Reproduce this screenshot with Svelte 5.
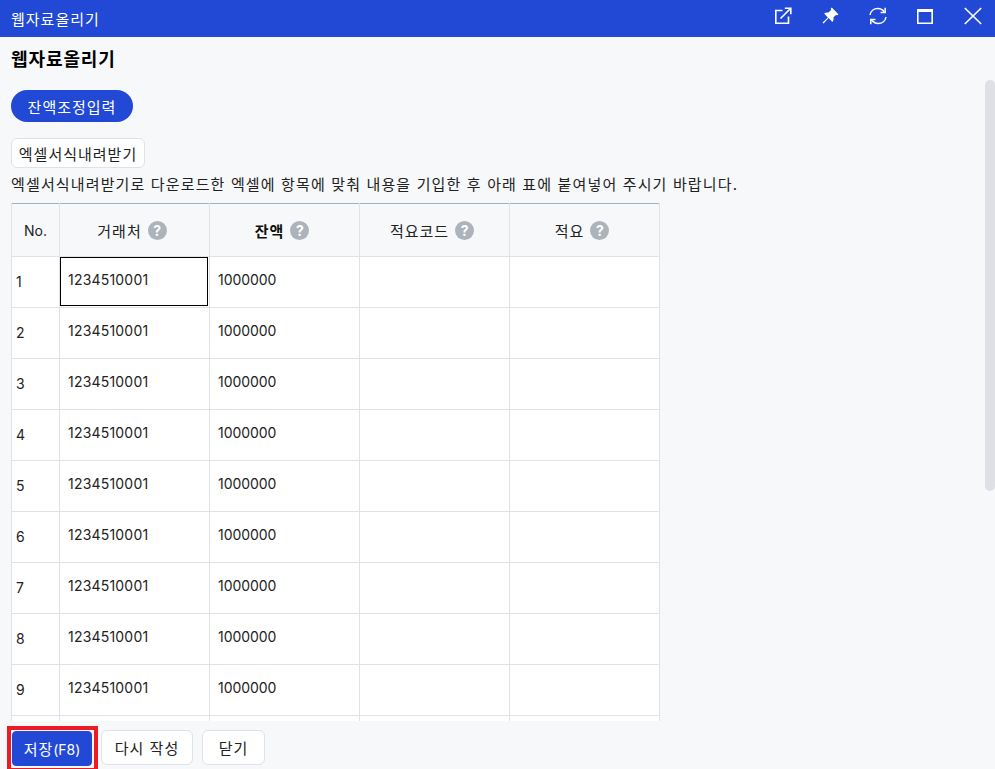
<script>
  const rows = [1, 2, 3, 4, 5, 6, 7, 8, 9, 10];
  const headers = [
    { label: '거래처', bold: false },
    { label: '잔액', bold: true },
    { label: '적요코드', bold: false },
    { label: '적요', bold: false }
  ];
</script>

<div class="page">
  <header class="titlebar">
    <span class="wintitle ko">웹자료올리기</span>
    <div class="winicons">
      <svg width="20" height="20" viewBox="0 0 20 20" fill="none" stroke="#fff" stroke-width="1.6">
        <path d="M15.5 10.5V17.2H2.8V4.5H9.5" />
        <path d="M7.5 12.5L17.5 2.5M11.8 2.2H17.8V8.2" />
      </svg>
      <svg width="20" height="20" viewBox="0 0 20 20" fill="#fff">
        <path d="M11.8 1.6L18.4 8.2L17.4 9.2L16 8.9L13.4 11.6C13.9 13.4 13.4 14.9 12.4 15.9L8.6 12.1L3.6 17.4L2.6 16.4L7.9 11.4L4.1 7.6C5.1 6.6 6.6 6.1 8.4 6.6L11.1 4L10.8 2.6Z" />
      </svg>
      <svg width="20" height="20" viewBox="0 0 20 20" fill="none" stroke="#fff" stroke-width="1.5">
        <path d="M2 9C2.6 5.2 5.8 2.6 9.9 2.6C12.6 2.6 14.8 3.8 16.4 6" />
        <path d="M18 11C17.4 14.8 14.2 17.4 10.1 17.4C7.4 17.4 5.2 16.2 3.6 14" />
        <path d="M17.2 1.8V6.6H12.5M2.8 18.2V13.4H7.5" />
      </svg>
      <svg width="20" height="20" viewBox="0 0 20 20" fill="none" stroke="#fff">
        <path d="M2.8 3.8H17.2V17.2H2.8Z" stroke-width="1.6" />
        <path d="M2.8 4.5H17.2" stroke-width="3" />
      </svg>
      <svg width="20" height="20" viewBox="0 0 20 20" fill="none" stroke="#fff" stroke-width="1.6">
        <path d="M1.8 2L18.2 18M18.2 2L1.8 18" />
      </svg>
    </div>
  </header>

  <main class="content">
    <h1 class="heading">웹자료올리기</h1>
    <button class="pill ko">잔액조정입력</button>
    <button class="download ko">엑셀서식내려받기</button>
    <p class="notice ko">엑셀서식내려받기로 다운로드한 엑셀에 항목에 맞춰 내용을 기입한 후 아래 표에 붙여넣어 주시기 바랍니다.</p>

    <table class="grid">
      <colgroup>
        <col class="c-no" />
        <col class="c-data" />
        <col class="c-data" />
        <col class="c-data" />
        <col class="c-data" />
      </colgroup>
      <thead>
        <tr>
          <th>No.</th>
          {#each headers as h}
            <th class:strong={h.bold}>
              <span class="th-inner"><span class="ko">{h.label}</span><span class="help">?</span></span>
            </th>
          {/each}
        </tr>
      </thead>
      <tbody>
        {#each rows as r}
          <tr>
            <td class="no"><span>{r}</span></td>
            <td class:selected={r === 1}><span class="val account">1234510001</span></td>
            <td><span class="val">1000000</span></td>
            <td></td>
            <td></td>
          </tr>
        {/each}
      </tbody>
    </table>

    <div class="scrollthumb"></div>
  </main>

  <footer class="actions">
    <div class="highlight"><button class="btn primary"><span class="ko">저장</span>(F8)</button></div>
    <button class="btn ko wide">다시 작성</button>
    <button class="btn ko narrow">닫기</button>
  </footer>
</div>

<style>
  :global(body) {
    margin: 0;
    background: #f7f8fa;
  }
  .page {
    width: 995px;
    height: 769px;
    display: flex;
    flex-direction: column;
    overflow: hidden;
    background: #f7f8fa;
    color: #111;
    font-family: Inter, "Noto Sans CJK KR", sans-serif;
    font-size: 14px;
  }
  .ko {
    font-size: 15px;
    letter-spacing: 1px;
  }
  .titlebar {
    flex: none;
    height: 37px;
    background: #2149d6;
    color: #fff;
    display: flex;
    align-items: center;
    justify-content: space-between;
    padding: 0 11px;
  }
  .winicons {
    display: flex;
    gap: 27.5px;
    margin-top: -5px;
    margin-right: 1.5px;
  }
  .winicons svg {
    display: block;
  }
  .content {
    flex: 1;
    min-height: 0;
    position: relative;
    overflow: hidden;
    padding: 0 11px;
  }
  .heading {
    margin: 10px 0 0;
    font-size: 18px;
    letter-spacing: 0.9px;
    line-height: 25px;
    font-weight: 700;
    color: #000;
  }
  button {
    font-family: inherit;
    display: block;
  }
  .pill {
    margin-top: 18px;
    height: 32px;
    width: 122px;
    padding: 0;
    border: 0;
    border-radius: 16px;
    background: #2149d6;
    color: #fff;
  }
  .download {
    margin-top: 16px;
    height: 30px;
    width: 134px;
    padding: 0;
    background: #fff;
    border: 1px solid #dfe2e8;
    border-radius: 6px;
    color: #222;
  }
  .notice {
    margin: 5px 0 0;
    line-height: 24px;
    color: #222;
    white-space: nowrap;
    letter-spacing: 1.14px;
  }
  .grid {
    margin-top: 6px;
    table-layout: fixed;
    width: 649px;
    border-collapse: collapse;
    background: #fff;
    border-top: 1px solid #9db3c6;
  }
  .c-no {
    width: 48px;
  }
  .c-data {
    width: 150px;
  }
  th, td {
    border: 1px solid #dfe2e8;
    padding: 0;
    font-size: 14px;
  }
  thead th {
    border-top: 0;
    height: 52px;
    background: #f7f8fa;
    font-weight: 400;
    text-align: center;
    color: #222;
  }
  th.strong {
    font-weight: 700;
    color: #111;
  }
  .th-inner {
    display: inline-flex;
    align-items: center;
    gap: 6px;
    padding-right: 5px;
  }
  .help {
    width: 19px;
    height: 19px;
    border-radius: 50%;
    background: #adb3ba;
    color: #fff;
    font-size: 14px;
    font-weight: 700;
    line-height: 19px;
    text-align: center;
  }
  tbody td {
    height: 50px;
    vertical-align: top;
    color: #222;
  }
  .val {
    display: block;
    padding: 13px 8px 0;
    line-height: 20px;
    letter-spacing: -0.05px;
  }
  .account {
    letter-spacing: 0.2px;
  }
  .no span {
    display: block;
    padding: 15px 4px 0;
    line-height: 20px;
  }
  td.selected {
    position: relative;
  }
  td.selected::after {
    content: "";
    position: absolute;
    inset: 0 1px 1px 0;
    border: 1px solid #000;
  }
  .scrollthumb {
    position: absolute;
    top: 43px;
    right: 0;
    width: 10px;
    height: 411px;
    background: #dee0e5;
    border-radius: 5px;
  }
  .actions {
    flex: none;
    height: 48px;
    display: flex;
    align-items: flex-start;
    padding: 5px 0 0 7px;
    box-sizing: border-box;
    background: #f7f8fa;
  }
  .highlight {
    border: 4px solid #ed1c24;
    padding: 1px 2px 1px 1px;
    margin-right: 3px;
    height: 36px;
  }
  .btn {
    height: 35px;
    padding: 0;
    background: #fff;
    border: 1px solid #dfe2e8;
    border-radius: 6px;
    color: #222;
  }
  .wide {
    width: 92px;
    margin-top: 4px;
    margin-right: 9px;
  }
  .narrow {
    width: 63px;
    margin-top: 4px;
  }
  .primary {
    width: 80px;
    background: #2149d6;
    border-color: #2149d6;
    color: #fff;
    font-size: 14px;
    border-radius: 4px;
  }
</style>
